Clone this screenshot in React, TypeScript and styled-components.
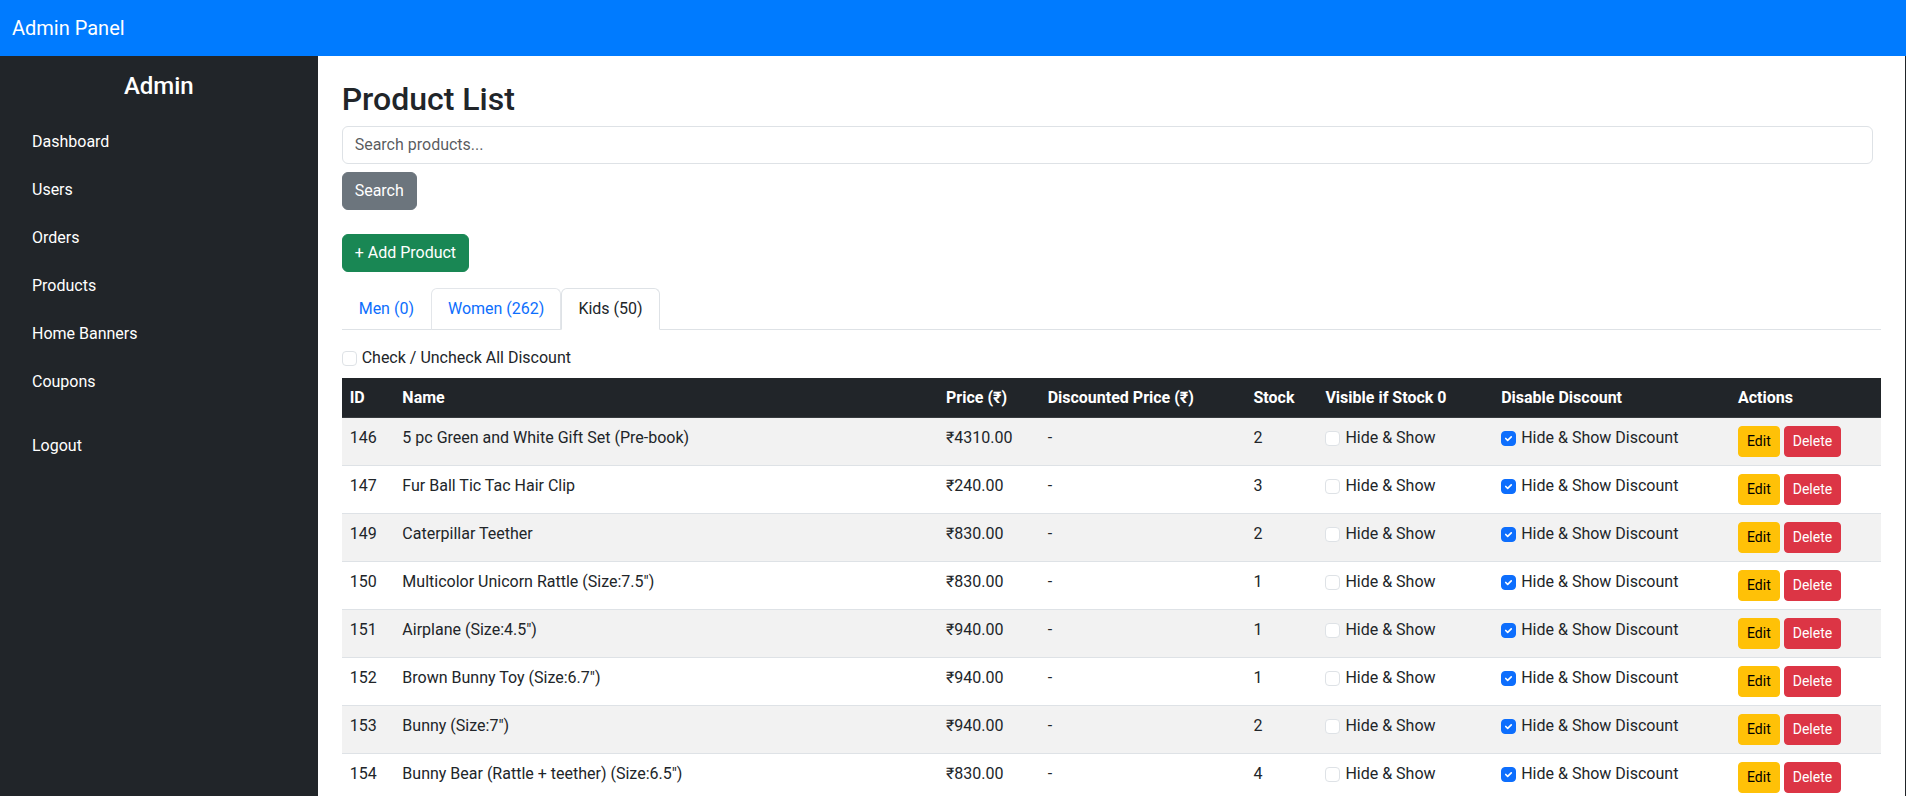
import React from "react";
import styled, { createGlobalStyle } from "styled-components";

const GlobalStyle = createGlobalStyle`
  *, *::before, *::after { box-sizing: border-box; }
  html, body { margin: 0; padding: 0; height: 100%; }
  body {
    font-family: Roboto, "Noto Sans", "DejaVu Sans", sans-serif;
    font-size: 16px;
    line-height: 1.5;
    color: #212529;
    background: #fff;
    overflow: hidden;
  }
  #root { height: 100%; }
`;

const Page = styled.div`
  display: flex;
  flex-direction: column;
  height: 100vh;
`;

const Navbar = styled.header`
  flex: 0 0 56px;
  display: flex;
  align-items: center;
  padding: 0 12px;
  background: #007bff;
`;

const Brand = styled.span`
  color: #fff;
  font-size: 20px;
  line-height: 30px;
`;

const Body = styled.div`
  flex: 1;
  display: flex;
  min-height: 0;
`;

const Sidebar = styled.aside`
  flex: 0 0 16.6667%;
  padding: 16px;
  background: #212529;
  color: #fff;
`;

const SidebarTitle = styled.h4`
  margin: 0 0 21px;
  font-size: 24px;
  font-weight: 500;
  line-height: 1.2;
  text-align: center;
`;

const NavList = styled.ul`
  display: flex;
  flex-direction: column;
  gap: 8px;
  margin: 0;
  padding: 0;
  list-style: none;
`;

const NavItem = styled.li<{ $separated?: boolean }>`
  margin-top: ${(p) => (p.$separated ? "16px" : "0")};
`;

const NavLink = styled.a`
  display: block;
  padding: 8px 16px;
  color: #fff;
  text-decoration: none;
  line-height: 24px;
`;

const Main = styled.main`
  flex: 1;
  min-width: 0;
  padding: 24px;
  border-right: 1px solid #212529;
  overflow-y: auto;
  scrollbar-width: none;
`;

const Title = styled.h2`
  margin: 0 0 8px;
  font-size: 32px;
  font-weight: 500;
  line-height: 1.2;
`;

const SearchForm = styled.form`
  display: flex;
  flex-direction: column;
  align-items: flex-start;
  gap: 8px;
  margin-bottom: 24px;
`;

const SearchInput = styled.input`
  display: block;
  width: calc(100% - 8px);
  padding: 6px 12px;
  font: inherit;
  font-size: 16px;
  line-height: 24px;
  color: #212529;
  background: #fff;
  border: 1px solid #dee2e6;
  border-radius: 6px;
  outline: none;
  &::placeholder { color: rgba(33, 37, 41, 0.75); }
`;

const variants = {
  secondary: { bg: "#6c757d", fg: "#fff" },
  success: { bg: "#198754", fg: "#fff" },
  warning: { bg: "#ffc107", fg: "#000" },
  danger: { bg: "#dc3545", fg: "#fff" },
};

type Variant = keyof typeof variants;

const Button = styled.button<{ $variant: Variant }>`
  display: inline-block;
  padding: 6px 12px;
  font-family: inherit;
  font-size: 16px;
  line-height: 24px;
  color: ${(p) => variants[p.$variant].fg};
  background: ${(p) => variants[p.$variant].bg};
  border: 1px solid ${(p) => variants[p.$variant].bg};
  border-radius: 6px;
  cursor: pointer;
`;

const AddButton = styled(Button)`
  margin-bottom: 16px;
`;

const SmallButton = styled(Button)`
  padding: 4px 8px;
  font-size: 14px;
  line-height: 21px;
  border-radius: 4px;
`;

const Tabs = styled.ul`
  display: flex;
  margin: 0 0 16px;
  padding: 0;
  list-style: none;
  border-bottom: 1px solid #dee2e6;
`;

const TabLink = styled.a<{ $state: "idle" | "hover" | "active" }>`
  display: block;
  margin-bottom: -1px;
  padding: 8px 16px;
  line-height: 24px;
  text-decoration: none;
  border: 1px solid transparent;
  border-top-left-radius: 6px;
  border-top-right-radius: 6px;
  color: ${(p) => (p.$state === "active" ? "#212529" : "#0d6efd")};
  background: ${(p) => (p.$state === "idle" ? "transparent" : "#fff")};
  border-color: ${(p) =>
    p.$state === "active"
      ? "#dee2e6 #dee2e6 #fff"
      : p.$state === "hover"
      ? "#e3e6ea #e3e6ea #dee2e6"
      : "transparent"};
`;

const CheckLabel = styled.label`
  display: inline-flex;
  align-items: center;
  gap: 5px;
  line-height: 24px;
  cursor: pointer;
`;

const CheckAllRow = styled.div`
  display: flex;
  height: 24px;
  margin-bottom: 8px;
`;

const Box = styled.span<{ $checked: boolean }>`
  display: inline-flex;
  align-items: center;
  justify-content: center;
  flex: 0 0 15px;
  width: 15px;
  height: 15px;
  border-radius: 4px;
  border: 1px solid ${(p) => (p.$checked ? "#0d6efd" : "#dee2e6")};
  background: ${(p) => (p.$checked ? "#0d6efd" : "#fff")};
`;

const Table = styled.table`
  width: 100%;
  table-layout: fixed;
  border-collapse: collapse;
`;

const Col = styled.col<{ $w?: number }>`
  width: ${(p) => (p.$w ? `${p.$w}px` : "auto")};
`;

const Th = styled.th`
  padding: 8px 8px 7px;
  text-align: left;
  font-weight: 700;
  line-height: 24px;
  color: #fff;
  background: #212529;
  border-bottom: 1px solid #373b3e;
  white-space: nowrap;
`;

const Row = styled.tr`
  &:nth-child(odd) > td { background: #f2f2f2; }
`;

const Td = styled.td`
  padding: 8px;
  line-height: 24px;
  vertical-align: top;
  border-bottom: 1px solid #dee2e6;
  white-space: nowrap;
  overflow: hidden;
`;

const Actions = styled.div`
  display: flex;
  gap: 4px;
`;

function Checkbox({ checked, label }: { checked: boolean; label: string }) {
  return (
    <CheckLabel>
      <Box $checked={checked}>
        {checked && (
          <svg width="11" height="11" viewBox="0 0 20 20" aria-hidden="true">
            <path
              d="m5 10 3.5 3.5L15 7"
              fill="none"
              stroke="#fff"
              strokeWidth="3"
              strokeLinecap="round"
              strokeLinejoin="round"
            />
          </svg>
        )}
      </Box>
      {label}
    </CheckLabel>
  );
}

const products = [
  { id: 146, name: "5 pc Green and White Gift Set (Pre-book)", price: "₹4310.00", stock: 2 },
  { id: 147, name: "Fur Ball Tic Tac Hair Clip", price: "₹240.00", stock: 3 },
  { id: 149, name: "Caterpillar Teether", price: "₹830.00", stock: 2 },
  { id: 150, name: 'Multicolor Unicorn Rattle (Size:7.5")', price: "₹830.00", stock: 1 },
  { id: 151, name: 'Airplane (Size:4.5")', price: "₹940.00", stock: 1 },
  { id: 152, name: 'Brown Bunny Toy (Size:6.7")', price: "₹940.00", stock: 1 },
  { id: 153, name: 'Bunny (Size:7")', price: "₹940.00", stock: 2 },
  { id: 154, name: 'Bunny Bear (Rattle + teether) (Size:6.5")', price: "₹830.00", stock: 4 },
];

const navItems = ["Dashboard", "Users", "Orders", "Products", "Home Banners", "Coupons"];

export default function App() {
  return (
    <>
      <GlobalStyle />
      <Page>
        <Navbar>
          <Brand>Admin Panel</Brand>
        </Navbar>
        <Body>
          <Sidebar>
            <SidebarTitle>Admin</SidebarTitle>
            <NavList>
              {navItems.map((item) => (
                <NavItem key={item}>
                  <NavLink href="#">{item}</NavLink>
                </NavItem>
              ))}
              <NavItem $separated>
                <NavLink href="#">Logout</NavLink>
              </NavItem>
            </NavList>
          </Sidebar>
          <Main>
            <Title>Product List</Title>
            <SearchForm onSubmit={(e) => e.preventDefault()}>
              <SearchInput type="text" placeholder="Search products..." />
              <Button $variant="secondary" type="submit">Search</Button>
            </SearchForm>
            <AddButton $variant="success" type="button">+ Add Product</AddButton>
            <Tabs>
              <li><TabLink href="#" $state="idle">Men (0)</TabLink></li>
              <li><TabLink href="#" $state="hover">Women (262)</TabLink></li>
              <li><TabLink href="#" $state="active">Kids (50)</TabLink></li>
            </Tabs>
            <CheckAllRow>
              <Checkbox checked={false} label="Check / Uncheck All Discount" />
            </CheckAllRow>
            <Table>
              <colgroup>
                <Col $w={52.7} />
                <Col />
                <Col $w={101.6} />
                <Col $w={205.9} />
                <Col $w={71.9} />
                <Col $w={175.8} />
                <Col $w={236.8} />
                <Col $w={151} />
              </colgroup>
              <thead>
                <tr>
                  <Th>ID</Th>
                  <Th>Name</Th>
                  <Th>Price (₹)</Th>
                  <Th>Discounted Price (₹)</Th>
                  <Th>Stock</Th>
                  <Th>Visible if Stock 0</Th>
                  <Th>Disable Discount</Th>
                  <Th>Actions</Th>
                </tr>
              </thead>
              <tbody>
                {products.map((p) => (
                  <Row key={p.id}>
                    <Td>{p.id}</Td>
                    <Td>{p.name}</Td>
                    <Td>{p.price}</Td>
                    <Td>-</Td>
                    <Td>{p.stock}</Td>
                    <Td><Checkbox checked={false} label="Hide & Show" /></Td>
                    <Td><Checkbox checked label="Hide & Show Discount" /></Td>
                    <Td>
                      <Actions>
                        <SmallButton $variant="warning" type="button">Edit</SmallButton>
                        <SmallButton $variant="danger" type="button">Delete</SmallButton>
                      </Actions>
                    </Td>
                  </Row>
                ))}
              </tbody>
            </Table>
          </Main>
        </Body>
      </Page>
    </>
  );
}
